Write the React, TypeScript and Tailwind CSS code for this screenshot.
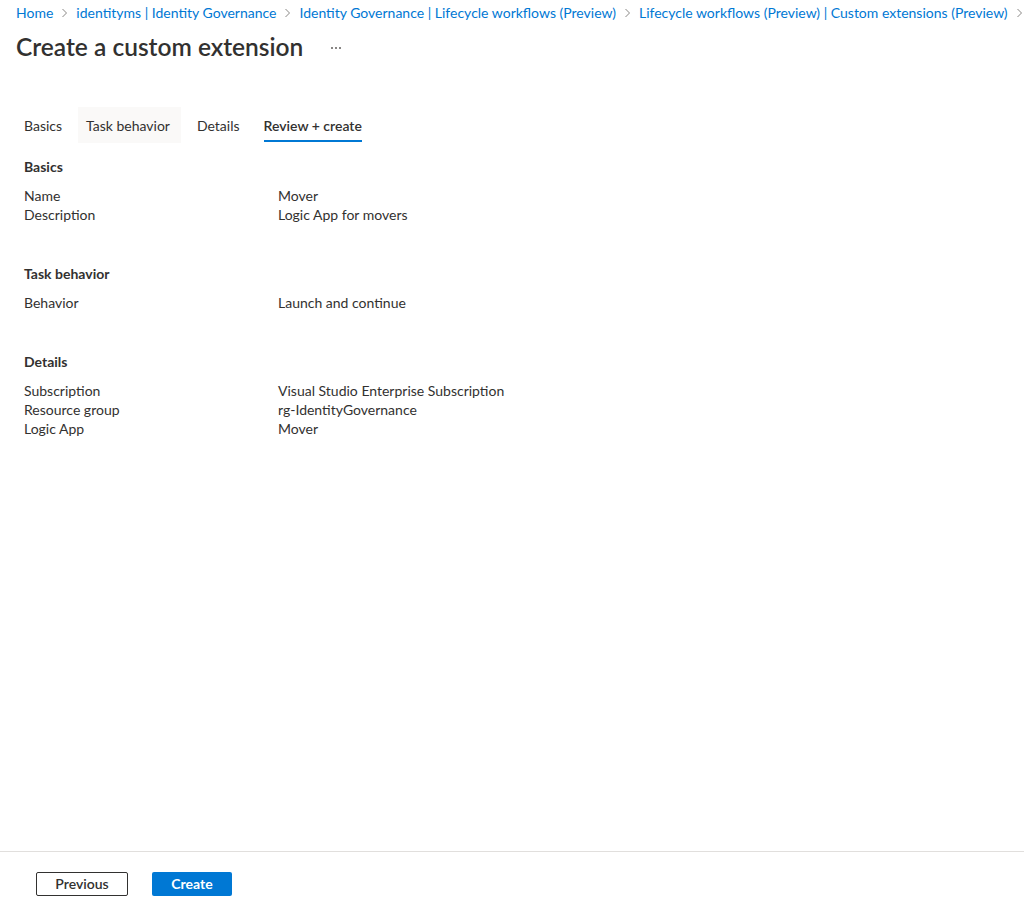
import React from "react";

const crumbs = [
  "Home",
  "identityms | Identity Governance",
  "Identity Governance | Lifecycle workflows (Preview)",
  "Lifecycle workflows (Preview) | Custom extensions (Preview)",
];

function Chevron() {
  return (
    <svg width="7" height="10" viewBox="0 0 7 10" className="mx-2 shrink-0" aria-hidden>
      <path d="M1.5 1 L5.5 5 L1.5 9" fill="none" stroke="#8a8886" strokeWidth="1" />
    </svg>
  );
}

type Row = [string, string];

function Section({ title, rows }: { title: string; rows: Row[] }) {
  return (
    <div className="flex flex-col">
      <div className="leading-5 font-bold text-[14px]">{title}</div>
      <div className="mt-[9px] flex flex-col">
        {rows.map(([k, v]) => (
          <div key={k} className="flex leading-[19px] text-[14px]">
            <div className="w-[254px] shrink-0">{k}</div>
            <div>{v}</div>
          </div>
        ))}
      </div>
    </div>
  );
}

export default function App() {
  return (
    <div
      className="h-[906px] w-full flex flex-col bg-white text-[#323130] overflow-hidden"
      style={{ fontFamily: "Lato, 'Open Sans', sans-serif" }}
    >
      {/* breadcrumb */}
      <div className="flex items-center pl-4 pt-[3px] h-[23px] text-[14px] leading-5 text-[#0078d4] whitespace-nowrap">
        {crumbs.map((c) => (
          <React.Fragment key={c}>
            <span>{c}</span>
            <Chevron />
          </React.Fragment>
        ))}
      </div>

      {/* title */}
      <div className="flex items-center pl-4 mt-[8px] h-8">
        <h1 className="text-[24.5px] leading-8 font-semibold">Create a custom extension</h1>
        <svg width="12" height="4" viewBox="0 0 12 4" className="ml-[27px] mt-[2px]" aria-hidden>
          <circle cx="2" cy="2" r="1" fill="#605e5c" />
          <circle cx="6" cy="2" r="1" fill="#605e5c" />
          <circle cx="10" cy="2" r="1" fill="#605e5c" />
        </svg>
      </div>

      {/* tabs */}
      <div className="flex pl-4 mt-[44px] gap-2 text-[14px]">
        <div className="h-9 px-2 pt-[9px] flex flex-col items-start">
          <span className="leading-5 pb-1 border-b-2 border-transparent">Basics</span>
        </div>
        <div className="h-9 pl-2 pr-[11px] pt-[9px] flex flex-col items-start bg-[#faf9f8]">
          <span className="leading-5 pb-1 border-b-2 border-transparent">Task behavior</span>
        </div>
        <div className="h-9 px-2 pt-[9px] flex flex-col items-start">
          <span className="leading-5 pb-1 border-b-2 border-transparent">Details</span>
        </div>
        <div className="h-9 px-2 pt-[9px] flex flex-col items-start">
          <span className="leading-5 pb-1 border-b-2 border-[#0078d4] font-semibold">Review + create</span>
        </div>
      </div>

      {/* content */}
      <div className="flex-1 pl-6 pt-[14px] flex flex-col gap-[40px]">
        <Section
          title="Basics"
          rows={[
            ["Name", "Mover"],
            ["Description", "Logic App for movers"],
          ]}
        />
        <Section title="Task behavior" rows={[["Behavior", "Launch and continue"]]} />
        <Section
          title="Details"
          rows={[
            ["Subscription", "Visual Studio Enterprise Subscription"],
            ["Resource group", "rg-IdentityGovernance"],
            ["Logic App", "Mover"],
          ]}
        />
      </div>

      {/* footer */}
      <div className="h-[55px] border-t border-[#e1dfdd] flex items-start pt-[20px] pl-9 gap-6">
        <button className="h-6 w-[92px] border border-[#323130] rounded-[2px] bg-white text-[14px] leading-5 text-[#323130] font-semibold">
          Previous
        </button>
        <button className="h-6 w-[80px] rounded-[2px] bg-[#0078d4] text-[14px] leading-5 text-white font-bold">
          Create
        </button>
      </div>
    </div>
  );
}
